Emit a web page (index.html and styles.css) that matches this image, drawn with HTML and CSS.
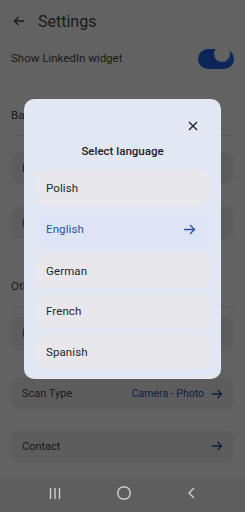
FILE: index.html
```html
<!DOCTYPE html>
<html>
<head>
<meta charset="utf-8">
<link rel="stylesheet" href="styles.css">
</head>
<body>
<div class="screen">
  <div class="app">
    <header class="topbar">
      <svg class="back" width="12" height="10" viewBox="0 0 12 10"><path d="M11 5H1.5M5.5 1L1.5 5l4 4" fill="none" stroke="#444" stroke-width="1.4"/></svg>
      <span class="title">Settings</span>
    </header>
    <div class="row-toggle">
      <span>Show LinkedIn widget</span>
      <span class="switch"><span class="thumb"></span></span>
    </div>
    <div class="section-title first">Basic</div>
    <div class="divider"></div>
    <div class="card c1"><span>Language</span></div>
    <div class="card c2"><span>Layout</span></div>
    <div class="section-title other">Other</div>
    <div class="divider"></div>
    <div class="card c3"><span>Information</span></div>
    <div class="card c4"><span>Scan Type</span><span class="val">Camera - Photo <svg width="11" height="10" viewBox="0 0 11 10"><path d="M0 5h9.5M5.5 1l4 4-4 4" fill="none" stroke="#2a4fa8" stroke-width="1.3"/></svg></span></div>
    <div class="card c5"><span>Contact</span><span class="val"><svg width="11" height="10" viewBox="0 0 11 10"><path d="M0 5h9.5M5.5 1l4 4-4 4" fill="none" stroke="#2a4fa8" stroke-width="1.3"/></svg></span></div>
  </div>
  <div class="scrim"></div>
  <div class="dialog">
    <div class="dialog-top">
      <svg class="close" width="10" height="10" viewBox="0 0 10 10"><path d="M1 1l8 8M9 1L1 9" stroke="#222" stroke-width="1.4"/></svg>
    </div>
    <div class="dialog-title">Select language</div>
    <div class="options">
      <div class="opt">Polish</div>
      <div class="opt sel"><span>English</span><svg width="12" height="11" viewBox="0 0 12 11"><path d="M0 5.5h10.5M6 1l4.5 4.5L6 10" fill="none" stroke="#2e52a4" stroke-width="1.3"/></svg></div>
      <div class="opt">German</div>
      <div class="opt">French</div>
      <div class="opt">Spanish</div>
    </div>
  </div>
  <nav class="navbar">
    <svg width="12" height="11" viewBox="0 0 12 11"><path d="M1.5 0v11M6 0v11M10.5 0v11" stroke="#cfcfcf" stroke-width="1.4"/></svg>
    <svg width="14" height="14" viewBox="0 0 14 14"><rect x="1" y="1" width="12" height="12" rx="5" fill="none" stroke="#cfcfcf" stroke-width="1.4"/></svg>
    <svg width="8" height="12" viewBox="0 0 8 12"><path d="M7 1L2 6l5 5" fill="none" stroke="#cfcfcf" stroke-width="1.4"/></svg>
  </nav>
</div>
</body>
</html>
```

FILE: styles.css
```css
* { box-sizing: border-box; }
html, body { margin: 0; padding: 0; }
body {
  width: 245px;
  height: 512px;
  overflow: hidden;
  font-family: Roboto, "Noto Sans", sans-serif;
  background: #5e5e5e;
}
.screen {
  position: relative;
  width: 245px;
  height: 512px;
  display: flex;
  flex-direction: column;
}
.app {
  height: 478px;
  background: #f6f6f6;
  color: #454545;
  display: flex;
  flex-direction: column;
}
.topbar {
  height: 42px;
  display: flex;
  align-items: center;
  padding-left: 13px;
}
.back { margin-right: 13px; }
.title { font-size: 16px; color: #444; }
.row-toggle {
  height: 32px;
  display: flex;
  align-items: center;
  justify-content: space-between;
  padding: 0 11px;
  font-size: 11.5px;
}
.switch {
  position: relative;
  width: 36px;
  height: 20px;
  border-radius: 10px;
  background: #1f5fe0;
  margin-top: 2px;
}
.thumb {
  position: absolute;
  right: 4px;
  top: -3px;
  width: 16px;
  height: 16px;
  border-radius: 50%;
  background: #f6f6f6;
}
.section-title {
  font-size: 11.5px;
  padding-left: 11px;
  height: 14px;
  line-height: 14px;
}
.section-title.first { margin-top: 34px; }
.section-title.other { margin-top: 40px; }
.divider {
  height: 1px;
  background: #dcdcdc;
  margin: 13px 11px 0;
}
.card {
  margin: 0 11px;
  height: 32px;
  border-radius: 8px;
  background: #e9e9e9;
  display: flex;
  align-items: center;
  justify-content: space-between;
  padding: 0 11px;
  font-size: 11px;
}
.c1 { margin-top: 16px; }
.c2 { margin-top: 23px; }
.c3 { margin-top: 10px; height: 33px; }
.c4 { margin-top: 28px; height: 31px; }
.c5 { margin-top: 21px; }
.val {
  display: flex;
  align-items: center;
  gap: 8px;
  color: #2a4fa8;
  font-size: 10.5px;
}
.scrim {
  position: absolute;
  left: 0; top: 0;
  width: 245px;
  height: 478px;
  background: rgba(0, 0, 0, 0.6);
}
.dialog {
  position: absolute;
  left: 24px;
  top: 99px;
  width: 197px;
  height: 280px;
  background: #e2e7f4;
  border-radius: 10px;
  padding: 0 12px;
  display: flex;
  flex-direction: column;
}
.dialog-top {
  height: 32px;
  display: flex;
  justify-content: flex-end;
  align-items: flex-end;
  padding-right: 11px;
}
.close { display: block; }
.dialog-title {
  text-align: center;
  font-size: 11.5px;
  font-weight: 500;
  color: #1e1e1e;
  margin-top: 13px;
  height: 14px;
  line-height: 14px;
}
.options {
  margin-top: 12px;
  display: flex;
  flex-direction: column;
  gap: 5.5px;
}
.opt {
  height: 35px;
  border-radius: 8px;
  background: #e8e8ec;
  display: flex;
  align-items: center;
  justify-content: space-between;
  padding: 0 13px 0 10px;
  font-size: 11.5px;
  color: #262626;
  letter-spacing: 0.1px;
}
.opt.sel {
  height: 37px;
  background: #dde5f6;
  color: #2e52a4;
}
.navbar {
  height: 34px;
  background: #5e5e5e;
  display: flex;
  align-items: center;
  justify-content: space-between;
  padding: 0 50px 4px 49px;
}
```
